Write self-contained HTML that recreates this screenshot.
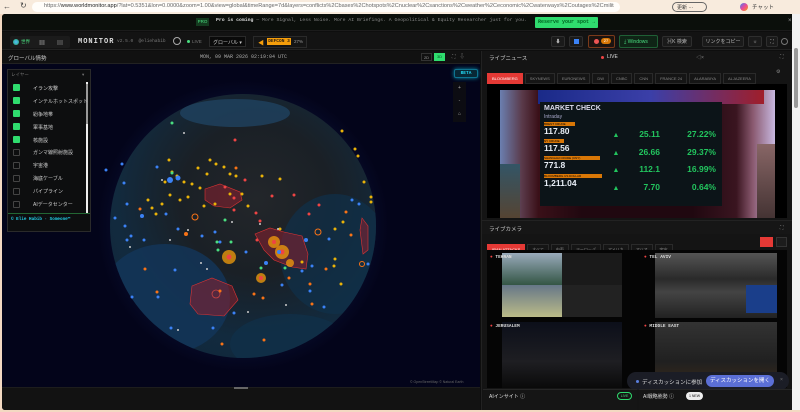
<!DOCTYPE html>
<html><head><meta charset="utf-8"><style>
*{margin:0;padding:0;box-sizing:border-box}
body{width:800px;height:412px;overflow:hidden;background:#f3d9c2;font-family:"Liberation Sans","Noto Sans CJK JP",sans-serif;position:relative;color:#ccc}
.a{position:absolute}
.mono{font-family:"Liberation Mono","Noto Sans CJK JP",monospace}
.btn{position:absolute;border:1px solid #2e2e2e;background:#1a1a1a;border-radius:2px;font-size:5px;color:#bbb;text-align:center}
.tab{display:inline-block;border:1px solid #2a2a2a;background:#151515;color:#888;font-size:4px;padding:2px 4px;margin-right:2px}
.chk{position:absolute;left:11px;width:7px;height:7px;border-radius:1px}
.lay{position:absolute;left:31px;font-size:5px;color:#ccc}
</style></head><body>
<div class="a" style="left:0;top:0;width:800px;height:14px;background:#f8ebdd"></div>
<div class="a" style="left:3px;top:2px;font-size:8px;color:#444">←</div>
<div class="a" style="left:20px;top:1px;font-size:8px;color:#444">↻</div>
<div class="a" style="left:32px;top:2px;width:588px;height:10px;background:#fffdfa;border-radius:5px;"></div>
<div class="a" style="left:44px;top:3px;width:570px;overflow:hidden;font-size:5.6px;color:#666;white-space:nowrap">https://<b style="color:#222;font-weight:normal">www.worldmonitor.app</b>/?lat=0.5351&amp;lon=0.0000&amp;zoom=1.00&amp;view=global&amp;timeRange=7d&amp;layers=conflicts%2Cbases%2Chotspots%2Cnuclear%2Csanctions%2Cweather%2Ceconomic%2Cwaterways%2Coutages%2Cmilitary%2C...</div>
<div class="a" style="left:672px;top:2px;width:35px;height:10px;border:1px solid #666;border-radius:5px;font-size:5px;color:#333;padding:1px 4px">更新 ···</div>
<div class="a" style="left:740px;top:3px;width:8px;height:8px;border-radius:50%;background:linear-gradient(135deg,#3b82f6,#ec4899,#f59e0b)"></div>
<div class="a" style="left:752px;top:3px;font-size:5.5px;color:#333">チャット</div>
<div class="a" style="left:2px;top:14px;width:790px;height:396px;background:#0e0e0e;border-radius:3px 0 0 3px;overflow:hidden">
 <div class="a" style="left:0;top:0;width:790px;height:17px;background:#0b0f0b;border-bottom:1px solid #1b1b1b"></div>
 <div class="a" style="left:194px;top:4px;width:13px;height:8px;background:#143b1f;color:#4ade80;font-size:4.5px;text-align:center;line-height:8px">PRO</div>
 <div class="a mono" style="left:214px;top:4px;font-size:4.8px;color:#888;white-space:nowrap"><b style="color:#ddd">Pro is coming</b> — More Signal, Less Noise. More AI Briefings. A Geopolitical &amp; Equity Researcher just for you.</div>
 <div class="a mono" style="left:533px;top:3px;width:63px;height:11px;background:#2fdc6e;color:#062;font-size:5px;font-weight:bold;text-align:center;line-height:11px;border-radius:1px">Reserve your spot →</div>
 <div class="a" style="left:786px;top:4px;font-size:6px;color:#999">×</div>
 <div class="a" style="left:0;top:18px;width:790px;height:18px;background:#131313;border-bottom:1px solid #222"></div>
 <div class="a" style="left:8px;top:22px;width:60px;height:12px;background:#1b1b1b;border-radius:2px"></div>
 <div class="a" style="left:11px;top:25px;width:6px;height:6px;border-radius:50%;background:radial-gradient(#5bf,#2a6)"></div>
 <div class="a" style="left:19px;top:25px;font-size:4.5px;color:#4ade80">世界</div>
 <div class="a" style="left:37px;top:24px;font-size:6px;color:#aaa">▦</div>
 <div class="a" style="left:55px;top:24px;font-size:6px;color:#aaa">▤</div>
 <div class="a mono" style="left:76px;top:24px;font-size:7px;color:#ddd;font-weight:bold;letter-spacing:1px">MONITOR</div>
 <div class="a mono" style="left:115px;top:25px;font-size:4.5px;color:#777">v2.5.0 &nbsp;@eliehabib</div>
 <div class="a" style="left:171px;top:23px;width:8px;height:8px;border-radius:50%;border:1.5px solid #aaa"></div>
 <div class="a" style="left:185px;top:26px;width:3px;height:3px;border-radius:50%;background:#4ade80"></div>
 <div class="a" style="left:190px;top:25px;font-size:4.5px;color:#777">LIVE</div>
 <div class="a" style="left:207px;top:22px;width:37px;height:11px;background:#0a0a0a;border:1px solid #2a2a2a;font-size:5px;color:#ccc;padding:2px 3px;white-space:nowrap">グローバル ▾</div>
 <div class="a" style="left:251px;top:22px;width:54px;height:12px;border:1px solid #2a2a2a;background:#151515"></div>
 <div class="a" style="left:256px;top:24px;font-size:6px;color:#f59e0b">◀</div>
 <div class="a mono" style="left:265px;top:24px;width:24px;height:7px;background:#f59e0b;color:#321;font-size:4.5px;font-weight:bold;text-align:center;line-height:7px">DEFCON 3</div>
 <div class="a" style="left:292px;top:25px;font-size:4.5px;color:#999">27%</div>
 <div class="btn" style="left:549px;top:22px;width:14px;height:11px;line-height:10px">⬇</div>
 <div class="btn" style="left:567px;top:22px;width:14px;height:11px"><div style="margin:2px auto;width:5px;height:5px;background:#3b82f6"></div></div>
 <div class="a" style="left:586px;top:21px;width:27px;height:13px;border:1px solid #7a3a1a;border-radius:2px;background:#1c1310"></div>
 <div class="a" style="left:592px;top:25px;width:5px;height:5px;border-radius:50%;background:#e55"></div>
 <div class="a" style="left:599px;top:24px;width:10px;height:6px;border-radius:3px;background:#d97706;font-size:4px;color:#fff;text-align:center">27</div>
 <div class="a" style="left:617px;top:21px;width:39px;height:13px;border:1px solid #1f5f35;background:#0f2416;border-radius:2px;font-size:5px;color:#4ade80;padding:3px 4px">⤓ Windows</div>
 <div class="btn" style="left:660px;top:22px;width:30px;height:11px;line-height:10px">⌘K 検索</div>
 <div class="btn" style="left:700px;top:22px;width:42px;height:11px;line-height:10px">リンクをコピー</div>
 <div class="btn" style="left:746px;top:22px;width:14px;height:11px;line-height:10px">☼</div>
 <div class="btn" style="left:764px;top:22px;width:12px;height:11px;line-height:10px">⛶</div>
 <div class="a" style="left:779px;top:24px;width:7px;height:7px;border-radius:50%;border:1px solid #777"></div>
 <div class="a" style="left:0;top:37px;width:478px;height:13px;background:#111;border-bottom:1px solid #222"></div>
 <div class="a" style="left:6px;top:40px;font-size:5.5px;color:#ccc">グローバル情勢</div>
 <div class="a mono" style="left:198px;top:40px;font-size:5px;color:#aaa">MON, 09 MAR 2026 02:19:04 UTC</div>
 <div class="a" style="left:419px;top:39px;width:11px;height:8px;border:1px solid #333;font-size:4px;color:#999;text-align:center;line-height:7px">2D</div>
 <div class="a" style="left:432px;top:39px;width:11px;height:8px;background:#2fdc6e;font-size:4px;color:#052;text-align:center;line-height:8px">3D</div>
 <div class="a" style="left:450px;top:39px;font-size:5px;color:#888">⛶ &nbsp; ⇩</div>
 <!-- map -->
 <div class="a" style="left:0;top:50px;width:478px;height:323px;background:#03041a"></div>
 <div class="a" style="left:94px;top:65px;width:294px;height:294px;border-radius:50%;background:radial-gradient(circle,rgba(30,50,130,.4) 40%,rgba(3,4,26,0) 70%)"></div>
 <div class="a" style="left:108px;top:80px;width:266px;height:264px;border-radius:50%;background:radial-gradient(circle at 55% 40%,#23262a 0%,#1a2026 35%,#122a3e 65%,#0e2438 100%);overflow:hidden">
  <div class="a" style="left:-10px;top:150px;width:130px;height:110px;border-radius:50%;background:#13365a;opacity:.8"></div>
  <div class="a" style="left:70px;top:5px;width:110px;height:28px;border-radius:50%;background:#1f4260;opacity:.8"></div>
  <div class="a" style="left:170px;top:100px;width:110px;height:120px;border-radius:50%;background:#10304a;opacity:.7"></div>
  <div class="a" style="left:120px;top:220px;width:120px;height:60px;border-radius:50%;background:#10304a;opacity:.7"></div>
 </div>
 <svg class="a" style="left:0;top:50px" width="478" height="323">
  <g fill="#8a2030" fill-opacity=".55" stroke="#d33" stroke-width=".6">
   <path d="M253 170 L268 164 L282 168 L300 172 L306 190 L304 205 L290 203 L272 196 L262 186Z"/>
   <path d="M203 125 L218 120 L238 128 L240 136 L228 144 L212 142 L203 136Z"/>
   <path d="M190 222 L210 214 L230 222 L236 236 L222 252 L196 250 L188 240Z"/>
   <path d="M360 154 L366 162 L366 186 L361 190 L358 166Z"/>
  </g>
  <g fill="#f59e0b" opacity=".75"><circle cx="272" cy="178" r="6"/><circle cx="280" cy="188" r="7"/><circle cx="227" cy="193" r="7"/><circle cx="259" cy="214" r="5"/><circle cx="288" cy="199" r="4"/></g>
  <g fill="#ef4444"><circle cx="272" cy="178" r="2"/><circle cx="280" cy="188" r="2.5"/><circle cx="227" cy="193" r="2.5"/><circle cx="259" cy="214" r="2"/></g>
  <circle cx="214" cy="230" r="4" fill="none" stroke="#c44" stroke-width=".8"/>
  <g fill="none" stroke="#f97316" stroke-width="1"><circle cx="193" cy="153" r="3"/><circle cx="316" cy="168" r="3"/><circle cx="360" cy="200" r="2.5"/></g>
  <g fill="#eab308">
   <circle cx="167" cy="96" r="1.5"/><circle cx="170" cy="108" r="1.5"/><circle cx="163" cy="118" r="1.5"/><circle cx="175" cy="112" r="1.5"/><circle cx="182" cy="118" r="1.5"/><circle cx="190" cy="120" r="1.5"/><circle cx="198" cy="124" r="1.5"/><circle cx="186" cy="133" r="1.5"/><circle cx="178" cy="136" r="1.5"/><circle cx="168" cy="131" r="1.5"/><circle cx="160" cy="140" r="1.5"/><circle cx="150" cy="144" r="1.5"/><circle cx="146" cy="136" r="1.5"/><circle cx="154" cy="150" r="1.5"/><circle cx="196" cy="104" r="1.5"/><circle cx="205" cy="110" r="1.5"/><circle cx="208" cy="96" r="1.5"/><circle cx="214" cy="100" r="1.5"/><circle cx="222" cy="103" r="1.5"/><circle cx="228" cy="110" r="1.5"/><circle cx="234" cy="112" r="1.5"/><circle cx="228" cy="130" r="1.5"/><circle cx="240" cy="130" r="1.5"/><circle cx="246" cy="142" r="1.5"/><circle cx="260" cy="112" r="1.5"/><circle cx="278" cy="115" r="1.5"/><circle cx="278" cy="165" r="1.5"/><circle cx="300" cy="198" r="1.5"/><circle cx="340" cy="67" r="1.5"/><circle cx="353" cy="85" r="1.5"/><circle cx="356" cy="92" r="1.5"/><circle cx="362" cy="118" r="1.5"/><circle cx="369" cy="133" r="1.5"/><circle cx="369" cy="138" r="1.5"/><circle cx="341" cy="158" r="1.5"/><circle cx="333" cy="165" r="1.5"/><circle cx="333" cy="195" r="1.5"/><circle cx="332" cy="202" r="1.5"/><circle cx="339" cy="220" r="1.5"/><circle cx="202" cy="142" r="1.5"/><circle cx="213" cy="140" r="1.5"/>
  </g>
  <g fill="#3b82f6">
   <circle cx="155" cy="103" r="1.5"/><circle cx="168" cy="116" r="3"/><circle cx="176" cy="114" r="2.5"/><circle cx="164" cy="150" r="1.5"/><circle cx="140" cy="152" r="2"/><circle cx="120" cy="100" r="1.5"/><circle cx="122" cy="119" r="1.5"/><circle cx="176" cy="165" r="1.5"/><circle cx="200" cy="172" r="1.5"/><circle cx="213" cy="168" r="1.5"/><circle cx="218" cy="178" r="1.5"/><circle cx="244" cy="188" r="1.5"/><circle cx="264" cy="199" r="2"/><circle cx="277" cy="188" r="2"/><circle cx="304" cy="176" r="2"/><circle cx="300" cy="207" r="1.5"/><circle cx="280" cy="221" r="1.5"/><circle cx="308" cy="227" r="1.5"/><circle cx="327" cy="175" r="1.5"/><circle cx="350" cy="136" r="1.5"/><circle cx="357" cy="140" r="1.5"/><circle cx="366" cy="200" r="1.5"/><circle cx="113" cy="154" r="1.5"/><circle cx="129" cy="172" r="1.5"/><circle cx="125" cy="176" r="1.5"/><circle cx="142" cy="176" r="1.5"/><circle cx="156" cy="233" r="1.5"/><circle cx="173" cy="206" r="1.5"/><circle cx="130" cy="233" r="1.5"/><circle cx="169" cy="264" r="1.5"/><circle cx="211" cy="264" r="1.5"/><circle cx="232" cy="249" r="1.5"/><circle cx="322" cy="243" r="1.5"/><circle cx="310" cy="202" r="1.5"/><circle cx="104" cy="106" r="1.5"/><circle cx="125" cy="140" r="1.5"/><circle cx="123" cy="162" r="1.5"/>
  </g>
  <g fill="#f97316"><circle cx="234" cy="104" r="1.5"/><circle cx="184" cy="170" r="2"/><circle cx="138" cy="145" r="1.5"/><circle cx="261" cy="234" r="1.5"/><circle cx="252" cy="230" r="1.5"/><circle cx="344" cy="148" r="1.5"/><circle cx="349" cy="171" r="1.5"/><circle cx="310" cy="240" r="1.5"/><circle cx="262" cy="276" r="1.5"/><circle cx="155" cy="228" r="1.5"/><circle cx="143" cy="205" r="1.5"/><circle cx="220" cy="280" r="1.5"/><circle cx="324" cy="205" r="1.5"/><circle cx="308" cy="220" r="1.5"/><circle cx="218" cy="227" r="1.5"/><circle cx="287" cy="214" r="1.5"/></g>
  <g fill="#ef4444"><circle cx="232" cy="134" r="1.5"/><circle cx="243" cy="116" r="1.5"/><circle cx="223" cy="123" r="1.5"/><circle cx="270" cy="132" r="1.5"/><circle cx="292" cy="131" r="1.5"/><circle cx="317" cy="141" r="1.5"/><circle cx="307" cy="150" r="1.5"/><circle cx="232" cy="146" r="1.5"/><circle cx="254" cy="149" r="1.5"/><circle cx="258" cy="157" r="1.5"/><circle cx="255" cy="176" r="1.5"/><circle cx="233" cy="76" r="1.5"/></g>
  <g fill="#ccc"><circle cx="182" cy="69" r="1"/><circle cx="230" cy="158" r="1"/><circle cx="258" cy="160" r="1"/><circle cx="276" cy="165" r="1"/><circle cx="199" cy="199" r="1"/><circle cx="168" cy="176" r="1"/><circle cx="128" cy="183" r="1"/><circle cx="186" cy="166" r="1"/><circle cx="205" cy="205" r="1"/><circle cx="246" cy="248" r="1"/><circle cx="284" cy="241" r="1"/><circle cx="176" cy="266" r="1"/><circle cx="160" cy="116" r="1"/></g>
  <g fill="#4ade80"><circle cx="170" cy="109" r="1.5"/><circle cx="170" cy="59" r="1.5"/><circle cx="223" cy="156" r="1.5"/><circle cx="215" cy="178" r="1.5"/><circle cx="229" cy="178" r="1.5"/><circle cx="259" cy="204" r="1.5"/><circle cx="283" cy="204" r="1.5"/><circle cx="216" cy="186" r="1.5"/></g>
 </svg>
 <div class="a" style="left:5px;top:55px;width:84px;height:163px;background:#0d0e0f;border:1px solid #2a2a2a"></div>
 <div class="a" style="left:9px;top:58px;font-size:4.5px;color:#777">レイヤー</div>
 <div class="a" style="left:80px;top:58px;font-size:4.5px;color:#777">▾</div>
 <div class="a" style="left:84px;top:68px;width:2px;height:132px;background:#eee"></div>
 <div class="a" style="left:84px;top:70px;width:2px;height:40px;background:#999"></div>
 <div class="chk" style="top:70px;background:#2fdc6e"></div><div class="lay" style="top:71px">イラン攻撃</div>
 <div class="chk" style="top:83px;background:#2fdc6e"></div><div class="lay" style="top:84px">インテルホットスポット</div>
 <div class="chk" style="top:96px;background:#2fdc6e"></div><div class="lay" style="top:97px">紛争地帯</div>
 <div class="chk" style="top:109px;background:#2fdc6e"></div><div class="lay" style="top:110px">軍事基地</div>
 <div class="chk" style="top:122px;background:#2fdc6e"></div><div class="lay" style="top:123px">核施設</div>
 <div class="chk" style="top:135px;border:1px solid #444"></div><div class="lay" style="top:135px">ガンマ線照射施設</div>
 <div class="chk" style="top:148px;border:1px solid #444"></div><div class="lay" style="top:148px">宇宙港</div>
 <div class="chk" style="top:161px;border:1px solid #444"></div><div class="lay" style="top:161px">海底ケーブル</div>
 <div class="chk" style="top:174px;border:1px solid #444"></div><div class="lay" style="top:174px">パイプライン</div>
 <div class="chk" style="top:187px;border:1px solid #444"></div><div class="lay" style="top:187px">AIデータセンター</div>
 <div class="a" style="left:6px;top:199px;width:82px;height:1px;background:#263"></div>
 <div class="a mono" style="left:9px;top:203px;font-size:4.3px;color:#22d3ee;font-weight:bold">© Elie Habib · Someone™</div>
 <div class="a mono" style="left:452px;top:55px;width:24px;height:9px;border:1px solid #0e7490;border-radius:2px;background:#082836;color:#22d3ee;font-size:4.5px;font-weight:bold;text-align:center;line-height:8px;box-shadow:0 0 4px #0891b2">BETA</div>
 <div class="a" style="left:451px;top:68px;width:13px;height:40px;background:#0c0c12;color:#aaa;font-size:5px;text-align:center;line-height:13px">+<br>-<br>⌂</div>
 <div class="a" style="left:408px;top:366px;font-size:3.5px;color:#666">© OpenStreetMap © Natural Earth</div>
 <div class="a" style="left:0;top:373px;width:478px;height:23px;background:#121212;border-top:1px solid #1d1d1d"></div>
 <div class="a" style="left:232px;top:373px;width:14px;height:2px;background:#666"></div>
 <!-- right column -->
 <div class="a" style="left:479px;top:37px;width:311px;height:359px;background:#141414;border-left:1px solid #222"></div>
 <div class="a" style="left:487px;top:40px;font-size:5.5px;color:#ccc">ライブニュース</div>
 <div class="a" style="left:599px;top:42px;width:3px;height:3px;border-radius:50%;background:#e44"></div>
 <div class="a" style="left:605px;top:40px;font-size:5px;color:#ddd">LIVE</div>
 <div class="a" style="left:694px;top:40px;font-size:5px;color:#888">◁×</div>
 <div class="a" style="left:778px;top:40px;font-size:5px;color:#888">⛶</div>
 <div class="a" style="left:485px;top:53px;white-space:nowrap"><span class="tab" style="background:#e53935;color:#fff;border-color:#e53935">BLOOMBERG</span><span class="tab">SKYNEWS</span><span class="tab">EURONEWS</span><span class="tab">DW</span><span class="tab">CNBC</span><span class="tab">CNN</span><span class="tab">FRANCE 24</span><span class="tab">ALARABIYA</span><span class="tab">ALJAZEERA</span></div>
 <div class="a" style="left:774px;top:55px;font-size:5px;color:#888">⚙</div>
 <div class="a" style="left:485px;top:70px;width:300px;height:134px;background:#000"></div>
 <div class="a" style="left:498px;top:76px;width:275px;height:128px;background:linear-gradient(90deg,#6b7fb0 0%,#5a3a4a 8%,#3a1018 14%,#200810 30%,#200810 70%,#3a1520 86%,#8a5a70 92%,#c8b8e0 100%)"></div>
 <div class="a" style="left:498px;top:150px;width:20px;height:54px;background:linear-gradient(#356,#543)"></div>
 <div class="a" style="left:755px;top:130px;width:18px;height:74px;background:linear-gradient(#866,#433)"></div>
 <div class="a" style="left:536px;top:76px;width:226px;height:14px;background:linear-gradient(90deg,#1a2a88,#3b3fa8,#a01e2a)"></div>
 <div class="a" style="left:538px;top:88px;width:182px;height:104px;background:#0c1418"></div>
 <div class="a" style="left:542px;top:91px;font-size:7px;font-weight:bold;color:#dde">MARKET CHECK</div>
 <div class="a" style="left:542px;top:100px;font-size:5px;color:#aac">Intraday</div>
 <div class="a" style="left:542px;top:108px;width:31px;height:4px;background:#d97706;font-size:3px;color:#000;line-height:4px">BRENT CRUDE</div>
 <div class="a" style="left:542px;top:112px;font-size:8.5px;font-weight:bold;color:#e8eef6">117.80</div>
 <div class="a" style="left:542px;top:125px;width:20px;height:4px;background:#d97706;font-size:3px;color:#000;line-height:4px">NY CRUDE</div>
 <div class="a" style="left:542px;top:129px;font-size:8.5px;font-weight:bold;color:#e8eef6">117.56</div>
 <div class="a" style="left:542px;top:142px;width:56px;height:4px;background:#d97706;font-size:3px;color:#000;line-height:4px">SHANGHAI CRUDE (CNY)</div>
 <div class="a" style="left:542px;top:146px;font-size:8.5px;font-weight:bold;color:#e8eef6">771.8</div>
 <div class="a" style="left:542px;top:160px;width:58px;height:4px;background:#d97706;font-size:3px;color:#000;line-height:4px">BLOOMBERG US DOLLAR</div>
 <div class="a" style="left:542px;top:164px;font-size:8.5px;font-weight:bold;color:#e8eef6">1,211.04</div>
 <div class="a" style="left:609px;top:113px;font-size:7px;color:#22c55e;line-height:17.5px;text-align:center;width:10px">▲<br>▲<br>▲<br>▲</div>
 <div class="a" style="left:620px;top:112px;font-size:8.5px;font-weight:bold;color:#22c55e;line-height:17.5px;text-align:right;width:38px">25.11<br>26.66<br>112.1<br>7.70</div>
 <div class="a" style="left:664px;top:112px;font-size:8.5px;font-weight:bold;color:#22c55e;line-height:17.5px;text-align:right;width:50px">27.22%<br>29.37%<br>16.99%<br>0.64%</div>
 <div class="a" style="left:480px;top:206px;width:310px;height:14px;background:#161616;border-top:1px solid #222"></div>
 <div class="a" style="left:487px;top:211px;font-size:5.5px;color:#ccc">ライブカメラ</div>
 <div class="a" style="left:778px;top:211px;font-size:5px;color:#888">⛶</div>
 <div class="a" style="left:485px;top:224px;white-space:nowrap"><span class="tab" style="background:#e53935;color:#fff;border-color:#e53935">IRAN ATTACKS</span><span class="tab">すべて</span><span class="tab">中東</span><span class="tab">ヨーロッパ</span><span class="tab">アメリカ</span><span class="tab">アジア</span><span class="tab">宇宙</span></div>
 <div class="a" style="left:758px;top:223px;width:13px;height:10px;background:#e53935"></div>
 <div class="a" style="left:774px;top:223px;width:11px;height:10px;background:#1c1c1c;border:1px solid #333"></div>
 <div class="a" style="left:485px;top:236px;width:300px;height:138px;background:#050505"></div>
 <div class="a" style="left:500px;top:239px;width:60px;height:32px;background:linear-gradient(#9ab,#354)"></div>
 <div class="a" style="left:560px;top:239px;width:60px;height:32px;background:#1a1a1a"></div>
 <div class="a" style="left:500px;top:271px;width:60px;height:32px;background:linear-gradient(#678,#bb8)"></div>
 <div class="a" style="left:560px;top:271px;width:60px;height:32px;background:#222"></div>
 <div class="a" style="left:653px;top:239px;width:122px;height:65px;background:linear-gradient(#555,#2a2a2a 40%,#444 60%,#222)"></div>
 <div class="a" style="left:744px;top:271px;width:31px;height:28px;background:#1a3e8a"></div>
 <div class="a" style="left:500px;top:308px;width:120px;height:66px;background:linear-gradient(#0c0f1a,#1e1e22 60%,#0a0a0a)"></div>
 <div class="a" style="left:653px;top:308px;width:122px;height:66px;background:linear-gradient(#333,#202020 60%,#3a2a1a)"></div>
 <div class="a mono" style="left:488px;top:241px;font-size:4.5px;color:#ddd;font-weight:bold"><span style="color:#e44">●</span> TEHRAN</div>
 <div class="a mono" style="left:642px;top:241px;font-size:4.5px;color:#ddd;font-weight:bold"><span style="color:#e44">●</span> TEL AVIV</div>
 <div class="a mono" style="left:488px;top:310px;font-size:4.5px;color:#ddd;font-weight:bold"><span style="color:#e44">●</span> JERUSALEM</div>
 <div class="a mono" style="left:642px;top:310px;font-size:4.5px;color:#ddd;font-weight:bold"><span style="color:#e44">●</span> MIDDLE EAST</div>
 <div class="a" style="left:625px;top:358px;width:162px;height:18px;border-radius:9px;background:#1b1d26"></div>
 <div class="a" style="left:634px;top:366px;width:3px;height:3px;border-radius:50%;background:#5b7fe0"></div>
 <div class="a" style="left:640px;top:364px;font-size:5.5px;color:#ddd">ディスカッションに参加</div>
 <div class="a" style="left:704px;top:361px;width:68px;height:12px;border-radius:6px;background:#5b6fd6;color:#fff;font-size:5.5px;text-align:center;line-height:12px">ディスカッションを開く</div>
 <div class="a" style="left:778px;top:363px;font-size:5px;color:#777">×</div>
 <div class="a" style="left:481px;top:375px;width:154px;height:21px;background:#151515;border-top:1px solid #262626"></div>
 <div class="a" style="left:487px;top:379px;font-size:5px;color:#ddd">AIインサイト ⓘ</div>
 <div class="a" style="left:615px;top:378px;width:15px;height:8px;border:1px solid #2fdc6e;border-radius:4px;font-size:3.5px;color:#4ade80;text-align:center;line-height:7px">LIVE</div>
 <div class="a" style="left:637px;top:375px;width:153px;height:21px;background:#151515;border-top:1px solid #262626"></div>
 <div class="a" style="left:641px;top:379px;font-size:5px;color:#ddd">AI戦略態勢 ⓘ</div>
 <div class="a" style="left:684px;top:378px;width:17px;height:8px;border-radius:4px;background:#eee;font-size:3.5px;color:#111;text-align:center;line-height:8px">1 NEW</div>
</div>
<div class="a" style="left:792px;top:14px;width:8px;height:396px;background:#f2f2f2"></div>
<div class="a" style="left:794px;top:48px;width:4px;height:60px;background:#999;border-radius:2px"></div>
</body></html>
